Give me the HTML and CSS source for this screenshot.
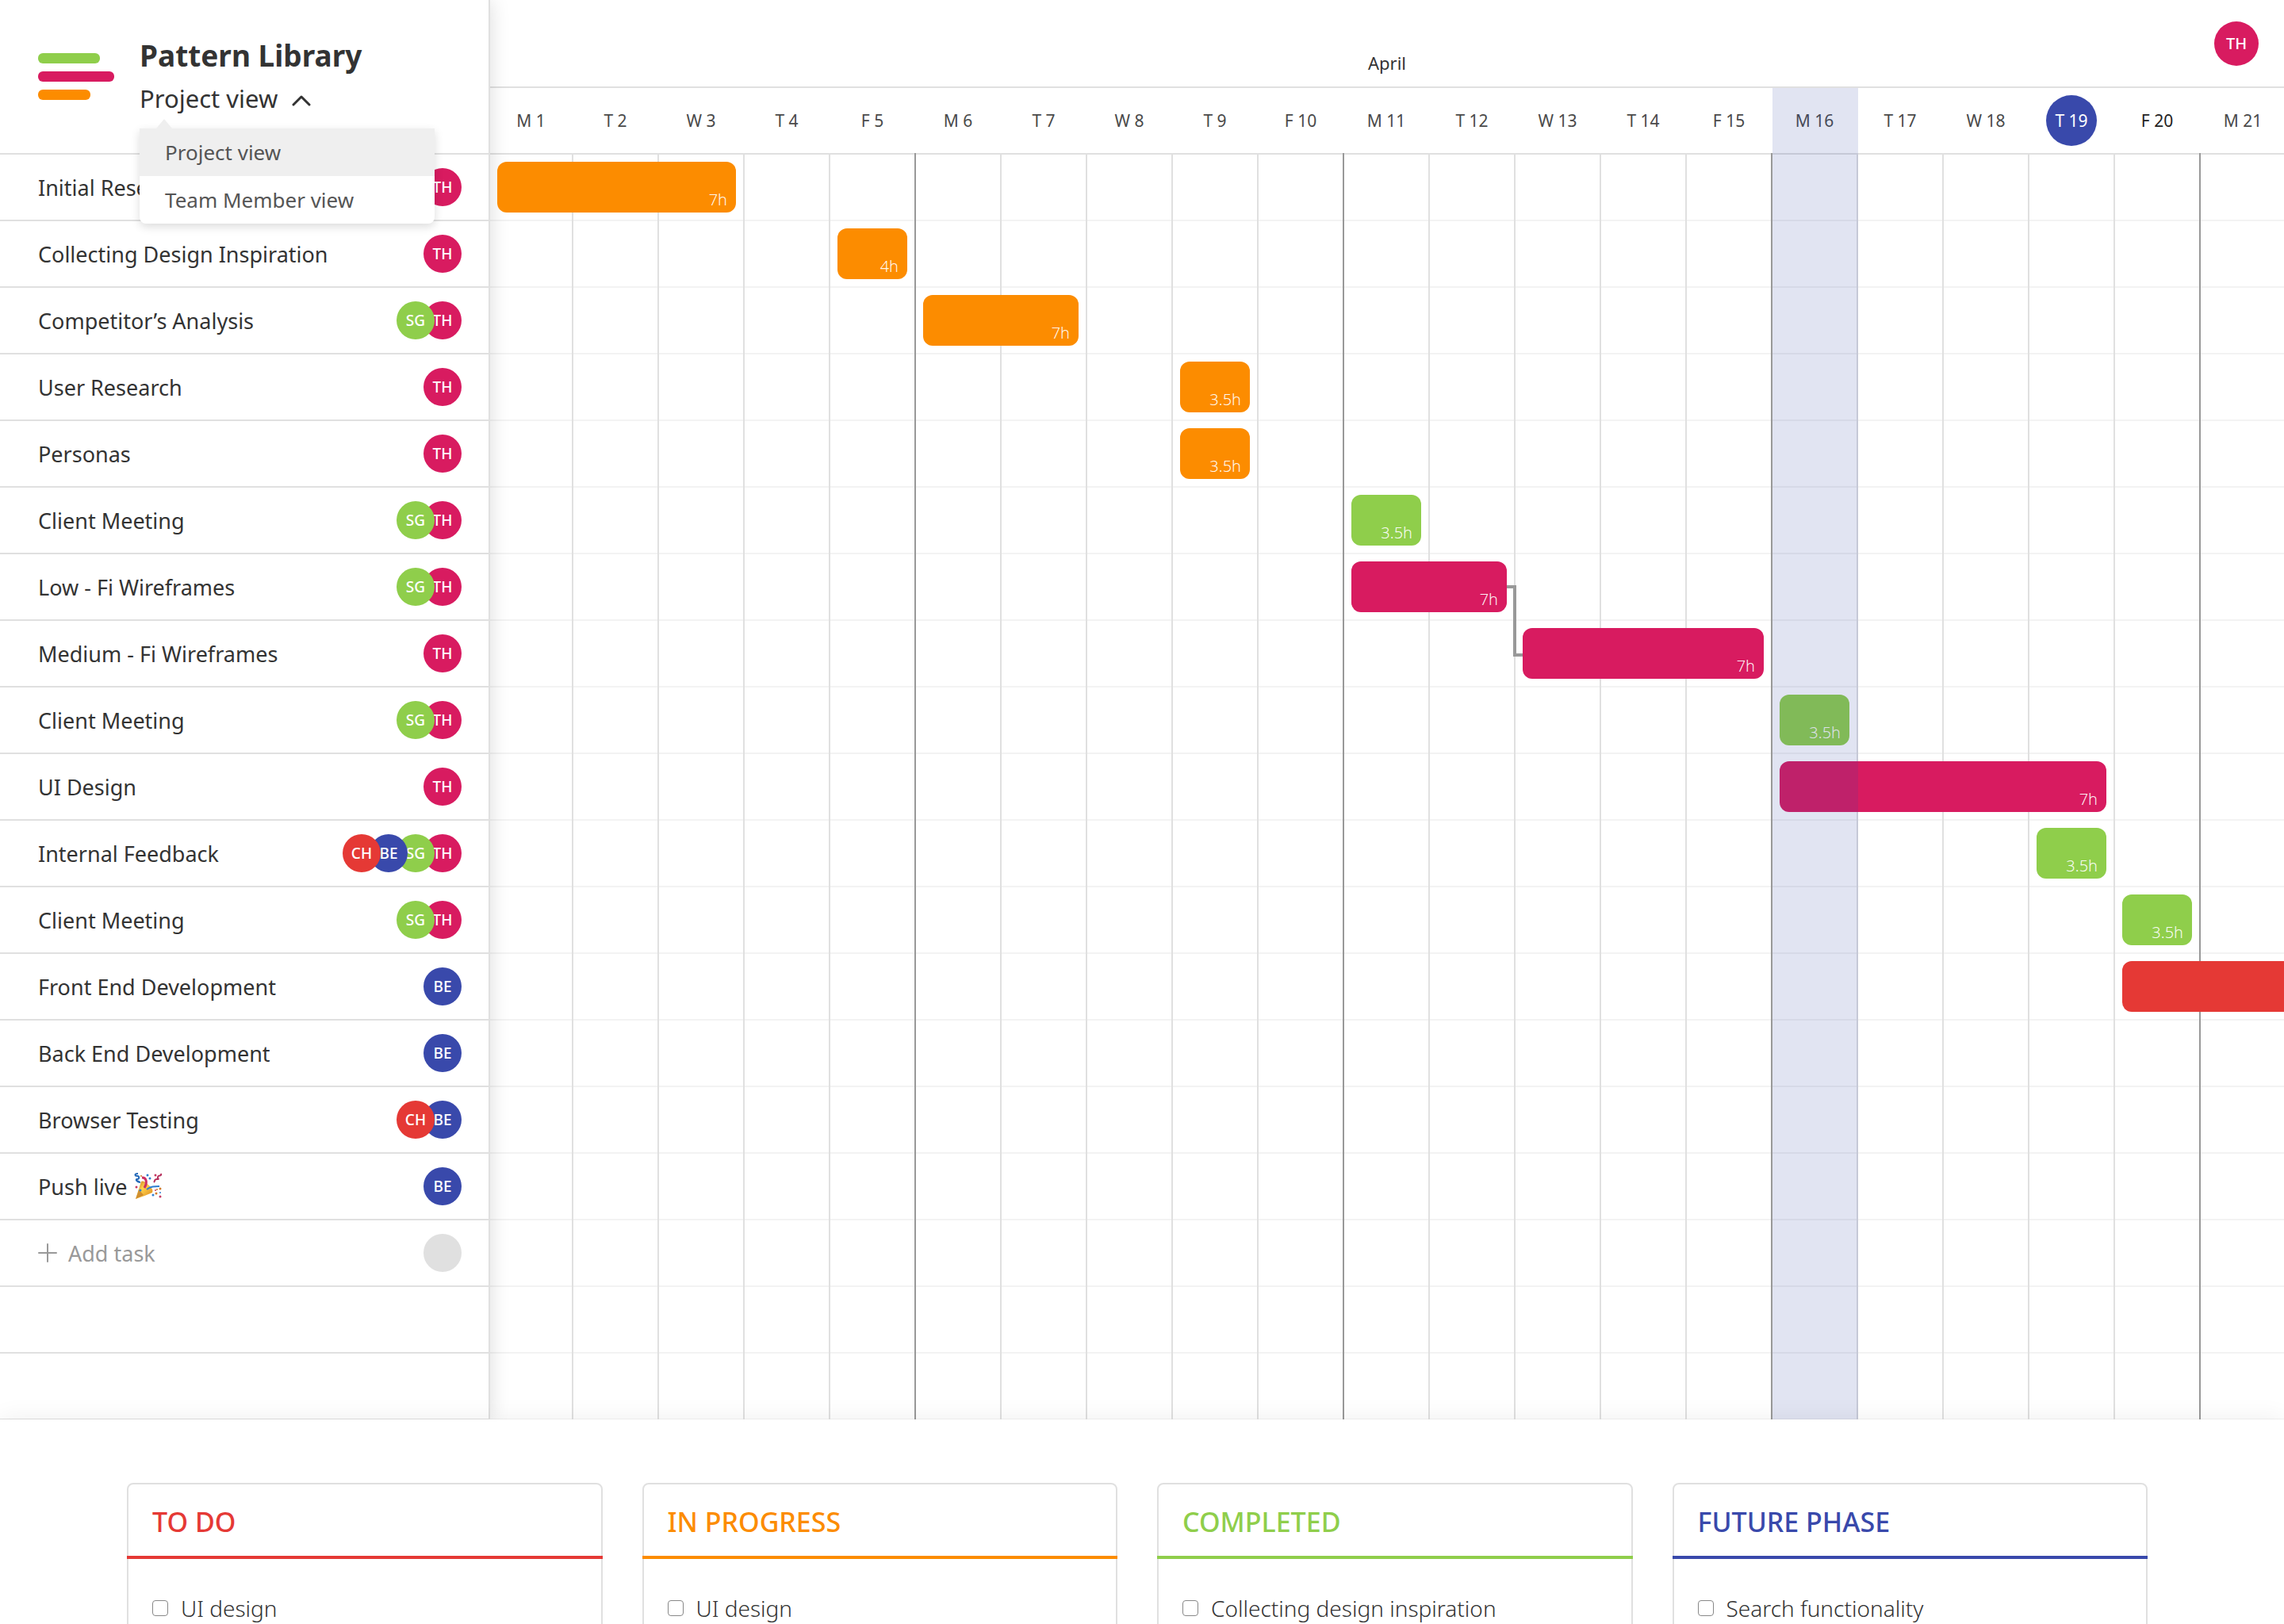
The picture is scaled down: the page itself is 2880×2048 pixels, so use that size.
FILE: index.html
```html
<!DOCTYPE html>
<html lang="en">
<head>
<meta charset="utf-8">
<meta name="viewport" content="width=device-width, initial-scale=1">
<title>Pattern Library – Project view</title>
<link rel="stylesheet" href="styles.css">
</head>
<body>
<div class="app">
  <main class="planner">
    <aside class="sidebar">
      <header class="project">
        <svg class="logo" width="96" height="60" viewBox="0 0 96 60" aria-hidden="true">
          <rect x="0" y="0" width="78" height="13" rx="6" fill="#8fce4b"/>
          <rect x="0" y="23" width="96" height="13" rx="6" fill="#d81b60"/>
          <rect x="0" y="46" width="66" height="13" rx="6" fill="#fc8c00"/>
        </svg>
        <div class="project-text">
          <h1>Pattern Library</h1>
          <div class="view-switch">
            <button class="view-button" type="button" aria-haspopup="true" aria-expanded="true">Project view
              <svg width="24" height="24" viewBox="0 0 24 24" aria-hidden="true"><path d="M2 20L12 10L22 20" fill="none" stroke="#333" stroke-width="3" stroke-linecap="round" stroke-linejoin="round"/></svg>
            </button>
            <ul class="view-menu">
              <li><button class="view-option is-selected" type="button">Project view</button></li>
              <li><button class="view-option" type="button">Team Member view</button></li>
            </ul>
          </div>
        </div>
      </header>
      <ul class="tasks">
        <li><span>Initial Research</span><span class="people"><i class="avatar th">TH</i></span></li>
        <li><span>Collecting Design Inspiration</span><span class="people"><i class="avatar th">TH</i></span></li>
        <li><span>Competitor’s Analysis</span><span class="people"><i class="avatar th">TH</i><i class="avatar sg">SG</i></span></li>
        <li><span>User Research</span><span class="people"><i class="avatar th">TH</i></span></li>
        <li><span>Personas</span><span class="people"><i class="avatar th">TH</i></span></li>
        <li><span>Client Meeting</span><span class="people"><i class="avatar th">TH</i><i class="avatar sg">SG</i></span></li>
        <li><span>Low - Fi Wireframes</span><span class="people"><i class="avatar th">TH</i><i class="avatar sg">SG</i></span></li>
        <li><span>Medium - Fi Wireframes</span><span class="people"><i class="avatar th">TH</i></span></li>
        <li><span>Client Meeting</span><span class="people"><i class="avatar th">TH</i><i class="avatar sg">SG</i></span></li>
        <li><span>UI Design</span><span class="people"><i class="avatar th">TH</i></span></li>
        <li><span>Internal Feedback</span><span class="people"><i class="avatar th">TH</i><i class="avatar sg">SG</i><i class="avatar be">BE</i><i class="avatar ch">CH</i></span></li>
        <li><span>Client Meeting</span><span class="people"><i class="avatar th">TH</i><i class="avatar sg">SG</i></span></li>
        <li><span>Front End Development</span><span class="people"><i class="avatar be">BE</i></span></li>
        <li><span>Back End Development</span><span class="people"><i class="avatar be">BE</i></span></li>
        <li><span>Browser Testing</span><span class="people"><i class="avatar be">BE</i><i class="avatar ch">CH</i></span></li>
        <li>
          <span class="live">Push live
            <svg width="36" height="34" viewBox="0 0 36 34" role="img" aria-label="Party popper">
              <defs><linearGradient id="cone" x1="0" y1="0" x2="1" y2="1"><stop offset="0" stop-color="#b8641a"/><stop offset=".4" stop-color="#ffd24a"/><stop offset="1" stop-color="#d9821b"/></linearGradient></defs>
              <path d="M2 33L9 11Q12 9 18 15Q25 21 23 25Q14 29 2 33Z" fill="url(#cone)"/>
              <path d="M2 33L12 28L6 21Z" fill="#a8581a" opacity=".5"/>
              <path d="M13 19C17 13 16 6 10 6" fill="none" stroke="#cc2f63" stroke-width="3"/>
              <path d="M16 21C21 17 26 17 32 17" fill="none" stroke="#2f7fd0" stroke-width="2"/>
              <path d="M5 1C0 1 1 4 4 4S7 8 4 8S4 12 8 12" fill="none" stroke="#2368b8" stroke-width="2"/>
              <path d="M34 1C35 5 31 2 30 5S33 8 29 8S27 10 25 12" fill="none" stroke="#b52f5c" stroke-width="2"/>
              <g fill="#2f7fd0"><circle cx="17" cy="3" r="1.5"/><circle cx="20" cy="7" r="1.5"/><circle cx="8" cy="22" r="1.5"/><circle cx="24" cy="28" r="1.5"/><circle cx="33" cy="25" r="1"/></g>
              <g fill="#c63a62"><circle cx="3" cy="18" r="1.5"/><circle cx="27" cy="3" r="1.5"/><circle cx="33" cy="30" r="1.5"/><circle cx="27" cy="22" r="1"/></g>
              <g fill="#d07a2a"><circle cx="28" cy="26" r="1.5"/><circle cx="33" cy="20" r="1.5"/><circle cx="9" cy="4" r="1"/><circle cx="29" cy="21" r="1"/></g>
            </svg>
          </span>
          <span class="people"><i class="avatar be">BE</i></span>
        </li>
        <li>
          <button class="add-task" type="button">
            <svg width="24" height="24" viewBox="0 0 24 24" aria-hidden="true"><path d="M12 1V23M1 12H23" fill="none" stroke="#999" stroke-width="2" stroke-linecap="round"/></svg>
            Add task
          </button>
          <span class="people"><i class="avatar"></i></span>
        </li>
        <li></li>
        <li></li>
      </ul>
    </aside>

    <section class="timeline">
      <header class="month-bar">
        <h2>April</h2>
        <button class="avatar avatar-large th" type="button">TH</button>
      </header>
      <ol class="days columns">
        <li>M 1</li><li>T 2</li><li>W 3</li><li>T 4</li><li>F 5</li>
        <li>M 6</li><li>T 7</li><li>W 8</li><li>T 9</li><li>F 10</li>
        <li>M 11</li><li>T 12</li><li>W 13</li><li>T 14</li><li>F 15</li>
        <li>M 16</li><li>T 17</li><li>W 18</li><li><span class="current">T 19</span></li><li class="strong">F 20</li>
        <li>M 21</li>
      </ol>
      <div class="chart">
        <ul class="rows">
          <li class="columns"><span class="bar orange" style="grid-column: 1 / span 3">7h</span></li>
          <li class="columns"><span class="bar orange" style="grid-column: 5 / span 1">4h</span></li>
          <li class="columns"><span class="bar orange" style="grid-column: 6 / span 2">7h</span></li>
          <li class="columns"><span class="bar orange" style="grid-column: 9 / span 1">3.5h</span></li>
          <li class="columns"><span class="bar orange" style="grid-column: 9 / span 1">3.5h</span></li>
          <li class="columns"><span class="bar green" style="grid-column: 11 / span 1">3.5h</span></li>
          <li class="columns"><span class="bar pink" style="grid-column: 11 / span 2">7h
            <svg class="link" width="20" height="90" viewBox="0 0 20 90" aria-hidden="true"><path d="M0 2H10V88H20" fill="none" stroke="#999" stroke-width="4"/></svg></span></li>
          <li class="columns"><span class="bar pink" style="grid-column: 13 / span 3">7h</span></li>
          <li class="columns"><span class="bar green" style="grid-column: 16 / span 1">3.5h</span></li>
          <li class="columns"><span class="bar pink" style="grid-column: 16 / span 4">7h</span></li>
          <li class="columns"><span class="bar green" style="grid-column: 19 / span 1">3.5h</span></li>
          <li class="columns"><span class="bar green" style="grid-column: 20 / span 1">3.5h</span></li>
          <li class="columns"><span class="bar red" style="grid-column: 20 / span 4"></span></li>
          <li></li><li></li><li></li><li></li><li></li><li></li>
        </ul>
        <div class="day-lines columns">
          <i></i><i></i><i></i><i></i><i class="week-end"></i>
          <i></i><i></i><i></i><i></i><i class="week-end"></i>
          <i></i><i></i><i></i><i></i><i class="week-end"></i>
          <i></i><i></i><i></i><i></i><i class="week-end"></i>
        </div>
      </div>
      <div class="highlight columns"><i></i></div>
    </section>
  </main>

  <section class="board">
    <article class="card todo">
      <h2>TO DO</h2>
      <label><input type="checkbox">UI design</label>
    </article>
    <article class="card progress">
      <h2>IN PROGRESS</h2>
      <label><input type="checkbox">UI design</label>
    </article>
    <article class="card completed">
      <h2>COMPLETED</h2>
      <label><input type="checkbox">Collecting design inspiration</label>
    </article>
    <article class="card future">
      <h2>FUTURE PHASE</h2>
      <label><input type="checkbox">Search functionality</label>
    </article>
  </section>
</div>
</body>
</html>
```

FILE: styles.css
```css
:root {
  --orange: #fc8c00;
  --green: #8fce4b;
  --pink: #d81b60;
  --red: #e53935;
  --blue: #3949ab;
  --line: #e0e0e0;
  --line-soft: #f3f3f3;
  --line-strong: #999;
  --text: #333;
  --row: 84px;
}

* { box-sizing: border-box; }

body {
  margin: 0;
  background: #fff;
  color: var(--text);
  font-family: "Noto Sans", sans-serif;
  font-size: 27px;
}

h1, h2, ul, ol { margin: 0; padding: 0; }
ul, ol { list-style: none; }
i { font-style: normal; }

button {
  margin: 0;
  padding: 0;
  border: 0;
  background: none;
  color: inherit;
  font: inherit;
  cursor: pointer;
}

.app {
  display: flex;
  flex-direction: column;
  height: 100vh;
  overflow: hidden;
}

.planner {
  flex: none;
  display: flex;
}

/* Sidebar */
.sidebar {
  position: relative;
  z-index: 1;
  flex: none;
  width: 618px;
  border-right: 2px solid var(--line);
  background: #fff;
  box-shadow: 0 0 24px rgba(0, 0, 0, .14);
}

.project {
  display: flex;
  gap: 32px;
  height: 195px;
  padding: 42px 32px 0 48px;
  border-bottom: 2px solid var(--line);
}

.logo { margin-top: 25px; }

.project h1 {
  font-size: 37px;
  font-weight: 700;
  line-height: 56px;
}

.view-switch { position: relative; }

.view-button {
  display: flex;
  align-items: center;
  gap: 18px;
  font-size: 31px;
  line-height: 52px;
}

.view-menu {
  position: absolute;
  z-index: 3;
  top: 64px;
  left: 0;
  width: 372px;
  border-radius: 0 0 8px 8px;
  background: #fff;
  box-shadow: 0 4px 12px rgba(0, 0, 0, .14);
}

.view-menu::before {
  content: "";
  position: absolute;
  bottom: 100%;
  left: 21px;
  border: 10px solid transparent;
  border-top: 0;
  border-bottom: 12px solid #efefef;
}

.view-option {
  display: block;
  width: 100%;
  padding: 0 32px;
  color: #555;
  font-size: 26px;
  line-height: 60px;
  text-align: left;
}

.view-option.is-selected { background: #efefef; }

.tasks li {
  display: flex;
  align-items: center;
  justify-content: space-between;
  height: var(--row);
  padding: 0 34px 0 48px;
  border-bottom: 2px solid var(--line);
}

.live {
  display: flex;
  align-items: center;
  gap: 8px;
}

.people {
  display: flex;
  flex-direction: row-reverse;
}

.avatar {
  position: relative;
  width: 48px;
  height: 48px;
  border-radius: 50%;
  background: var(--line);
  color: #fff;
  font-size: 19px;
  font-weight: 500;
  line-height: 48px;
  text-align: center;
}

.avatar + .avatar { margin-right: -14px; }

.avatar-large {
  width: 56px;
  height: 56px;
  font-size: 20px;
  line-height: 56px;
}

.th { background: var(--pink); }
.sg { background: var(--green); }
.be { background: var(--blue); }
.ch { background: var(--red); }

.add-task {
  display: flex;
  align-items: center;
  gap: 14px;
  color: #999;
}

/* Timeline */
.timeline {
  flex: 1;
  display: grid;
  grid-template-rows: 111px var(--row) auto;
  grid-template-columns: 100%;
  min-width: 0;
  overflow: hidden;
}

.columns {
  display: grid;
  grid-template-columns: 105px repeat(23, 108px);
}

.month-bar {
  display: grid;
  grid-row: 1;
  align-items: center;
  padding-right: 32px;
  border-bottom: 2px solid var(--line);
}

.month-bar > * { grid-area: 1 / 1; }

.month-bar h2 {
  padding: 48px 0 0 32px;
  font-size: 22px;
  font-weight: 400;
  line-height: 50px;
  text-align: center;
}

.month-bar .avatar { justify-self: end; }

.days {
  grid-row: 2;
  border-bottom: 2px solid var(--line);
  color: #4a4a4a;
  font-size: 21px;
}

.days li {
  display: flex;
  align-items: center;
  justify-content: center;
  padding-right: 2px;
}

.days .strong { color: #222; }

.days .current {
  width: 64px;
  height: 64px;
  border-radius: 50%;
  background: var(--blue);
  color: #fff;
  line-height: 64px;
  text-align: center;
}

.chart {
  display: grid;
  grid-row: 3;
  grid-template-columns: 100%;
}

.chart > * { grid-area: 1 / 1; }

.rows li {
  height: var(--row);
  border-bottom: 2px solid var(--line-soft);
}

.day-lines i { border-right: 2px solid var(--line); }

.day-lines .week-end {
  margin-top: -2px;
  border-color: var(--line-strong);
}

.bar {
  position: relative;
  z-index: 2;
  align-self: center;
  height: 64px;
  margin: 0 11px 0 9px;
  padding: 34px 11px 0 0;
  border-radius: 12px;
  color: rgba(255, 255, 255, .95);
  font-size: 20px;
  font-weight: 300;
  line-height: 28px;
  text-align: right;
}

.orange { background: var(--orange); }
.green { background: var(--green); }
.pink { background: var(--pink); }
.red { background: var(--red); }

.link {
  position: absolute;
  top: 30px;
  left: 100%;
}

/* Tinted column laid over day header and bars */
.highlight {
  position: relative;
  z-index: 2;
  grid-row: 2 / 4;
  grid-column: 1;
  pointer-events: none;
}

.highlight i {
  grid-column: 16;
  background: rgba(57, 73, 171, .15);
}

.month-bar, .days, .chart { grid-column: 1; }

/* Board */
.board {
  position: relative;
  z-index: 3;
  flex: 1;
  display: grid;
  grid-template-columns: repeat(4, 1fr);
  gap: 50px;
  min-height: 0;
  margin-top: -1px;
  padding: 80px 172px 0 160px;
  background: #fff;
  box-shadow: 0 0 30px rgba(0, 0, 0, .07);
}

.card {
  --accent: var(--red);
  min-height: 400px;
  border: 2px solid var(--line);
  border-radius: 8px;
}

.progress { --accent: var(--orange); }
.completed { --accent: var(--green); }
.future { --accent: var(--blue); }

.card h2 {
  margin: 0 -2px 38px;
  padding: 4px 32px 0;
  border-bottom: 4px solid var(--accent);
  color: var(--accent);
  font-size: 34px;
  font-weight: 500;
  line-height: 86px;
}

.card label {
  display: flex;
  align-items: center;
  gap: 16px;
  padding: 0 30px;
  font-size: 28px;
  font-weight: 300;
  line-height: 48px;
}

.card input {
  appearance: none;
  width: 20px;
  height: 20px;
  margin: 0;
  border: 1px solid #888;
  border-radius: 4px;
}
```
